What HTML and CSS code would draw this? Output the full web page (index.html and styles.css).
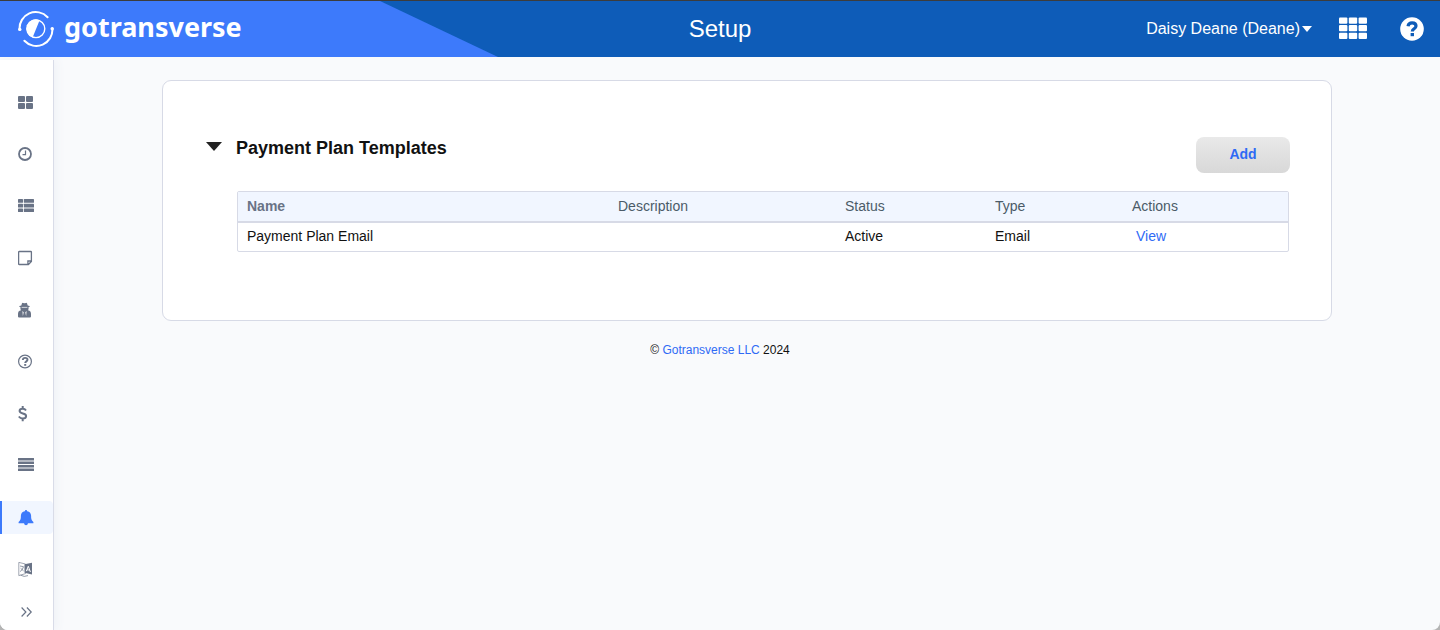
FILE: index.html
```html
<!DOCTYPE html>
<html lang="en">
<head>
<meta charset="utf-8">
<meta name="viewport" content="width=device-width, initial-scale=1">
<title>Setup</title>
<link rel="stylesheet" href="styles.css">
</head>
<body>
<div class="window">
<header class="topbar">
  <div class="topbar-left">
    <a class="brand" href="#">
      <svg class="brand-mark" viewBox="0 0 36 36" aria-hidden="true">
        <g fill="none" stroke="#fff" stroke-width="2" stroke-linecap="round">
          <path d="M1.600 18.400A16.200 16.200 0 0 1 29.600 6.200"/>
          <path d="M34.400 17.600A16.200 16.200 0 0 1 6.400 29.800"/>
        </g>
        <circle cx="1.8" cy="18.4" r="1.7" fill="#fff"/>
        <circle cx="34.2" cy="17.8" r="1.7" fill="#fff"/>
        <circle cx="18" cy="17.800" r="8.800" fill="none" stroke="#fff" stroke-width="1.400"/>
        <path fill="#fff" d="M21.600 9.200A9.400 9.400 0 1 0 14.600 26.600Z"/>
      </svg>
      <span class="brand-name">gotransverse</span>
    </a>
  </div>
  <h1 class="page-title">Setup</h1>
  <div class="topbar-right">
    <button class="user-menu" type="button">Daisy Deane (Deane)<span class="caret"></span></button>
    <button class="icon-button" type="button" aria-label="Applications">
      <svg width="28" height="24" viewBox="0 0 28 24" fill="#fff">
        <rect y=".4" width="8.400" height="6.300" rx="1"/><rect x="9.800" y=".4" width="8.400" height="6.300" rx="1"/><rect x="19.600" y=".4" width="8.400" height="6.300" rx="1"/>
        <rect y="8" width="8.400" height="6.300" rx="1"/><rect x="9.800" y="8" width="8.400" height="6.300" rx="1"/><rect x="19.600" y="8" width="8.400" height="6.300" rx="1"/>
        <rect y="15.700" width="8.400" height="6.300" rx="1"/><rect x="9.800" y="15.700" width="8.400" height="6.300" rx="1"/><rect x="19.600" y="15.700" width="8.400" height="6.300" rx="1"/>
      </svg>
    </button>
    <button class="icon-button" type="button" aria-label="Help">
      <svg width="24" height="24" viewBox="0 0 24 24">
        <circle cx="12" cy="12" r="11.8" fill="#fff"/>
        <path d="M8 9.200C8.400 7 10 5.900 12.100 5.900c2.300 0 3.900 1.200 3.900 3.100 0 2.900-3.700 2.600-3.700 5.400" fill="none" stroke="#0e5cb8" stroke-width="3.200"/>
        <rect x="10.600" y="16" width="3.400" height="3.200" fill="#0e5cb8"/>
      </svg>
    </button>
  </div>
</header>
<div class="layout">
  <nav class="sidebar" aria-label="Main">
    <a class="nav-item" href="#" aria-label="Dashboard">
      <svg width="16" height="16" viewBox="0 0 16 16"><rect y="2" width="7" height="6" rx="1"/><rect x="8" y="2" width="7" height="6" rx="1"/><rect y="9" width="7" height="6" rx="1"/><rect x="8" y="9" width="7" height="6" rx="1"/></svg>
    </a>
    <a class="nav-item" href="#" aria-label="History">
      <svg width="16" height="16" viewBox="0 0 16 16"><circle cx="7" cy="8" r="6" fill="none" stroke="currentColor" stroke-width="1.800"/><path d="M7.500 4.600v4H4.500" fill="none" stroke="currentColor" stroke-width="1.200"/></svg>
    </a>
    <a class="nav-item" href="#" aria-label="Lists">
      <svg width="16" height="16" viewBox="0 0 16 16"><rect y="1" width="5" height="3.800" rx=".6"/><rect x="5.800" y="1" width="10.200" height="3.800" rx=".6"/><rect y="5.700" width="5" height="3.800" rx=".6"/><rect x="5.800" y="5.700" width="10.200" height="3.800" rx=".6"/><rect y="10.400" width="5" height="3.600" rx=".6"/><rect x="5.800" y="10.400" width="10.200" height="3.600" rx=".6"/></svg>
    </a>
    <a class="nav-item" href="#" aria-label="Notes">
      <svg width="16" height="16" viewBox="0 0 16 16"><path d="M.6 2.100q0-.6.6-.6h11.600q.6 0 .6.600v9.400l-3 3H1.200q-.6 0-.6-.6zM13.400 11H9.900v3.500" fill="none" stroke="currentColor" stroke-width="1.300"/></svg>
    </a>
    <a class="nav-item" href="#" aria-label="Users">
      <svg width="16" height="16" viewBox="0 0 16 16"><path d="M3.300 3.500 4 1.200Q4.300.6 5 .9l1.500.4L8 .9q.8-.3 1 .3l.7 2.300 1.900.6q.6.400-.1.700L10.500 5.200q.4 1.900-.5 3l1.400.5q1.600.6 1.600 3v2.700q0 1.100-1.100 1.100H1.100Q0 15.500 0 14.400v-2.700q0-2.400 1.600-3l1.400-.5Q2.100 7.100 2.500 5.200l-1-.4q-.7-.3-.1-.7z"/><path d="M3.600 5.400h5.800" stroke="#fff" stroke-width=".7"/><path d="m4.400 9 1.300 1.300-.8 4zm4.200 0-1.300 1.300.8 4z" fill="#fff"/></svg>
    </a>
    <a class="nav-item" href="#" aria-label="Support">
      <svg width="16" height="16" viewBox="0 0 16 16"><circle cx="7" cy="7.500" r="6.400" fill="none" stroke="currentColor" stroke-width="1.200"/><path d="M4.800 6c.1-1.400 1-2.100 2.300-2.100 1.400 0 2.400.7 2.400 1.900 0 1.700-2.300 1.500-2.300 3.300" fill="none" stroke="currentColor" stroke-width="1.900"/><rect x="6.200" y="10" width="2" height="1.800"/></svg>
    </a>
    <a class="nav-item" href="#" aria-label="Billing">
      <svg width="16" height="16" viewBox="0 0 16 16"><path d="M8 4.500C7.300 3.400 6.100 2.800 4.700 2.800 2.900 2.800 1.600 3.700 1.600 5.100c0 3.200 6.500 1.500 6.500 4.800 0 1.500-1.400 2.500-3.400 2.500-1.700 0-3-.7-3.900-1.900M4.700 0v3m0 9v3.200" fill="none" stroke="currentColor" stroke-width="2"/></svg>
    </a>
    <a class="nav-item" href="#" aria-label="Records">
      <svg width="16" height="16" viewBox="0 0 16 16"><rect width="16" height="2.500" rx=".3"/><rect y="3.500" width="16" height="2.500" rx=".3"/><rect y="7" width="16" height="2.500" rx=".3"/><rect y="10.500" width="16" height="2.500" rx=".3"/></svg>
    </a>
    <a class="nav-item nav-item-active" href="#" aria-label="Notifications" aria-current="page">
      <svg width="16" height="16" viewBox="0 0 16 16"><path d="M8 0q1.200 0 1.200 1.200c2.600.5 3.900 2.200 3.900 4.600 0 3.400.4 4.600 2.300 6.200v1.200H.6v-1.200C2.500 10.400 2.900 9.200 2.900 5.800c0-2.400 1.300-4.100 3.900-4.600Q6.800 0 8 0zM6 13.200h4Q9.700 15.300 8 15.300T6 13.200z"/></svg>
    </a>
    <a class="nav-item" href="#" aria-label="Language">
      <svg width="16" height="16" viewBox="0 0 16 16"><path d="M.8.400 7.500 2v9.600L.8 13.600z" fill="none" stroke="currentColor" stroke-width=".8" opacity=".8"/><path d="M6.500 2.200 14 .8v11.800l-7.500-1.800z"/><path d="m8.300 9.200 2-5 2.100 5.800M9 7.800l2.800.3" fill="none" stroke="#fff" stroke-width="1"/><path d="M2 4 5.500 4.700Q4.800 8 2 9.600M2.600 6.300l3 2.600M2.600 13.200q3.500 2.200 7.400.4" fill="none" stroke="currentColor" stroke-width=".9" opacity=".8"/></svg>
    </a>
    <button class="nav-expand" type="button" aria-label="Expand menu">
      <svg width="16" height="16" viewBox="0 0 16 16"><path d="m3.600 2.500 4.300 4.500-4.300 4.500M8.900 2.500l4.300 4.500-4.300 4.500" fill="none" stroke="currentColor" stroke-width="1.200"/></svg>
    </button>
  </nav>
  <div class="content">
    <main class="card">
      <div class="section-head">
        <button class="toggle" type="button" aria-label="Collapse section"><span class="toggle-arrow"></span></button>
        <h2 class="section-title">Payment Plan Templates</h2>
        <button class="add-button" type="button">Add</button>
      </div>
      <div class="table-frame">
        <table class="templates">
          <thead>
            <tr><th class="col-name" scope="col">Name</th><th class="col-description" scope="col">Description</th><th class="col-status" scope="col">Status</th><th class="col-type" scope="col">Type</th><th class="col-actions" scope="col">Actions</th></tr>
          </thead>
          <tbody>
            <tr><td>Payment Plan Email</td><td></td><td>Active</td><td>Email</td><td><a class="row-action" href="#">View</a></td></tr>
          </tbody>
        </table>
      </div>
    </main>
    <footer class="footer">© <a href="#">Gotransverse LLC</a> 2024</footer>
  </div>
</div>
</div>
</body>
</html>
```
FILE: styles.css
```css
* { box-sizing: border-box; }

body {
  margin: 0;
  background: #b4b4b4;
  color: #111;
  font-family: "Liberation Sans", Arial, sans-serif;
  font-size: 14px;
  line-height: 20px;
}

a { color: #2f6af5; text-decoration: none; }

button {
  padding: 0;
  border: 0;
  background: none;
  color: inherit;
  font: inherit;
  cursor: pointer;
}

svg { display: block; fill: currentColor; }

.window {
  display: flex;
  flex-direction: column;
  min-height: 100vh;
  overflow: hidden;
  border-radius: 0 0 8px 8px;
  background: #f9fafc;
}

.topbar {
  display: grid;
  grid-template-columns: 1fr auto 1fr;
  align-items: center;
  height: 57px;
  border-top: 1px solid #3c3c3c;
  background: #0e5cb8;
  color: #fff;
}

.topbar-left {
  display: flex;
  align-items: center;
  align-self: stretch;
  justify-self: start;
  width: 498px;
  padding-left: 18px;
  background: #3d7afb;
  clip-path: polygon(0 0, 380px 0, 100% 100%, 0 100%);
}

.brand {
  display: flex;
  align-items: center;
  gap: 10px;
  color: #fff;
}

.brand-mark { width: 36px; height: 36px; }

.brand-name {
  padding-bottom: 4px;
  font-family: "Noto Sans", sans-serif;
  font-size: 27px;
  font-weight: 700;
  line-height: 36px;
}

.page-title {
  margin: 0;
  font-size: 24px;
  font-weight: 400;
  line-height: 32px;
}

.topbar-right {
  display: flex;
  align-items: center;
  justify-content: flex-end;
  padding-right: 16px;
}

.user-menu {
  display: flex;
  align-items: center;
  gap: 2px;
  margin-right: 27px;
  font-size: 16px;
}

.caret {
  border: 5px solid transparent;
  border-top: 6px solid #fff;
  border-bottom: 0;
}

.icon-button + .icon-button { margin-left: 33px; }

.layout { display: flex; flex: 1; }

.sidebar {
  display: flex;
  flex: none;
  flex-direction: column;
  gap: 19px;
  width: 54px;
  margin-top: 3px;
  padding-top: 25px;
  border-right: 1px solid #d9dce8;
  background: #fff;
  box-shadow: 2px 0 10px #eef1f6;
  color: #697386;
}

.nav-item {
  display: flex;
  align-items: center;
  height: 33px;
  padding-left: 18px;
  color: inherit;
}

.nav-item-active {
  padding-left: 16px;
  border-left: 2px solid #3d7afb;
  border-radius: 0 4px 4px 0;
  background: #f1f6ff;
  color: #3d7afb;
}

.nav-expand {
  display: flex;
  align-items: center;
  height: 16px;
  padding-left: 18px;
}

.content {
  flex: 1;
  min-width: 0;
  padding: 23px 24px 0;
}

.card {
  max-width: 1170px;
  margin: 0 auto;
  padding: 56px 41px 68px 43px;
  border: 1px solid #d7dae6;
  border-radius: 9px;
  background: #fff;
}

.section-head {
  display: flex;
  align-items: flex-start;
  margin-bottom: 18px;
}

.toggle { padding: 5px 14px 5px 0; }

.toggle-arrow {
  display: block;
  border: 8px solid transparent;
  border-top: 9px solid #222;
  border-bottom: 0;
}

.section-title {
  flex: 1;
  margin: 0;
  font-size: 18px;
  line-height: 22px;
}

.add-button {
  width: 94px;
  height: 36px;
  padding-bottom: 2px;
  border-radius: 8px;
  background: linear-gradient(#e9e9e9, #d8d8d8);
  color: #2f6af5;
  font-weight: 700;
}

.table-frame {
  margin: 0 1px 0 31px;
  border: 1px solid #d7dae6;
  border-radius: 2px;
}

.templates {
  width: 100%;
  border-spacing: 0;
  table-layout: fixed;
}

.templates th,
.templates td {
  padding: 4px 9px 5px;
  text-align: left;
}

.templates td { padding-top: 3px; }

.templates th {
  border-bottom: 2px solid #d7dae6;
  background: #f1f6ff;
  color: #4b5b68;
  font-weight: 400;
}

.templates .col-name { color: #697386; font-weight: 700; }
.col-description { width: 227px; }
.col-status { width: 150px; }
.col-type { width: 137px; }
.col-actions { width: 165px; }

.row-action { padding-left: 4px; }

.footer {
  padding: 19px 54px 0 0;
  font-size: 12px;
  text-align: center;
}
```
